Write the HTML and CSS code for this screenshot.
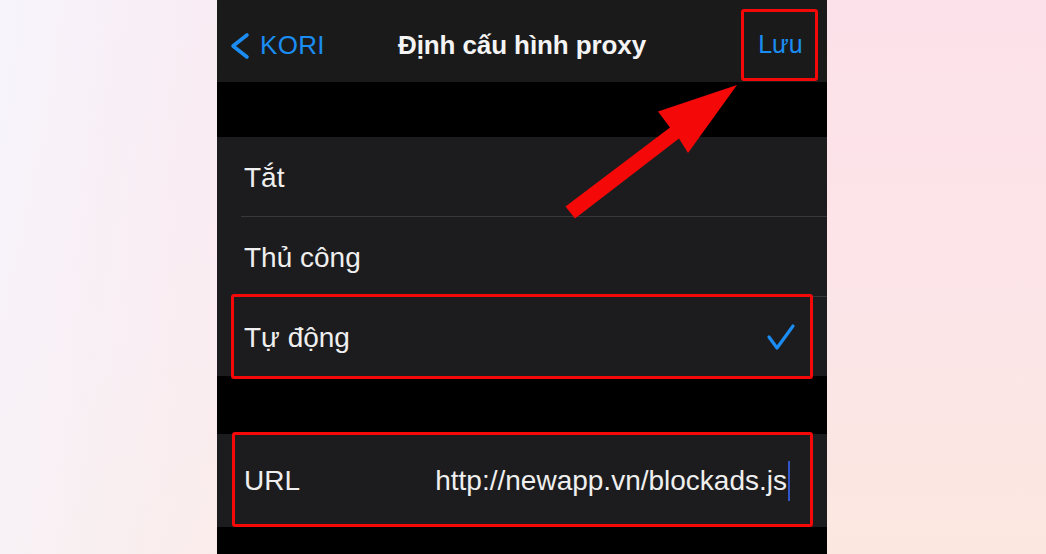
FILE: index.html
```html
<!DOCTYPE html>
<html lang="vi">
<head>
<meta charset="utf-8">
<title>Định cấu hình proxy</title>
<link rel="stylesheet" href="styles.css">
</head>
<body>
<div class="page">
  <main class="phone">
    <header class="nav">
      <div class="nav-left">
        <a class="back">
          <svg class="chevron" width="20" height="28" viewBox="0 0 20 28"><path d="M17 3 L3 14 L17 25" fill="none" stroke="#1b8df2" stroke-width="3.6" stroke-linecap="round" stroke-linejoin="round"/></svg>
          <span>KORI</span>
        </a>
      </div>
      <h1 class="title">Định cấu hình proxy</h1>
      <div class="nav-right"><span class="save">Lưu</span></div>
    </header>
    <div class="gap gap-top"></div>
    <ul class="group">
      <li class="row"><span class="label">Tắt</span></li>
      <li class="row"><span class="label">Thủ công</span></li>
      <li class="row highlight selected">
        <span class="label">Tự động</span>
        <svg class="check" width="30" height="28" viewBox="0 0 30 28"><path d="M3 14 L11 25 L27 3" fill="none" stroke="#1b8df2" stroke-width="3.2" stroke-linecap="round" stroke-linejoin="round"/></svg>
      </li>
    </ul>
    <div class="gap gap-mid"></div>
    <div class="group">
      <div class="row row-url highlight-url">
        <span class="label">URL</span>
        <span class="url-value">http://newapp.vn/blockads.js<span class="cursor"></span></span>
      </div>
    </div>
  </main>
  <svg class="arrow" width="1046" height="554" viewBox="0 0 1046 554">
    <polygon points="565.5,206.5 670,127.5 658,111.5 737,85 688,153 679,138.5 575,218.5" fill="#f50808"/>
  </svg>
</div>
</body>
</html>
```
FILE: styles.css
```css
* { box-sizing: border-box; }
html, body { margin: 0; padding: 0; }
body {
  width: 1046px;
  height: 554px;
  overflow: hidden;
  font-family: "Liberation Sans", Arial, sans-serif;
}
.page {
  position: relative;
  width: 1046px;
  height: 554px;
  padding-left: 217px;
  background:
    linear-gradient(100deg, rgba(247,245,252,0.95) 0%, rgba(252,238,240,0.0) 45%),
    linear-gradient(180deg, #fce1ea 0%, #fce5e7 60%, #fce7e0 100%);
}
.phone {
  width: 610px;
  height: 554px;
  background: #000;
  display: flex;
  flex-direction: column;
}
.nav {
  height: 82px;
  padding-top: 8px;
  background: #1a1a1b;
  display: grid;
  grid-template-columns: 1fr auto 1fr;
  align-items: center;
}
.nav-left { padding-left: 13px; }
.back {
  display: flex;
  align-items: center;
  gap: 10px;
  color: #1b8df2;
  font-size: 26px;
  letter-spacing: 0.3px;
}
.chevron { display: block; margin-top: 1px; }
.title {
  margin: 0;
  color: #f4f4f4;
  font-size: 26px;
  font-weight: bold;
  letter-spacing: -0.1px;
}
.nav-right {
  display: flex;
  justify-content: flex-end;
  padding-right: 9px;
}
.save {
  width: 77px;
  height: 72px;
  margin-top: -1px;
  border: 3px solid #f50808;
  border-radius: 3px;
  display: flex;
  align-items: center;
  justify-content: center;
  color: #1b8df2;
  font-size: 25px;
  padding-left: 2px;
  padding-bottom: 1px;
}
.gap-top { height: 55px; }
.gap-mid { height: 58px; }
.group {
  list-style: none;
  margin: 0;
  padding: 0 0 0 24px;
  background: #1c1c1e;
}
.row {
  position: relative;
  height: 79px;
  padding-left: 3px;
  padding-top: 3px;
  display: flex;
  align-items: center;
  color: #efefef;
  font-size: 28px;
}
.row + .row {
  height: 80px;
  border-top: 1px solid #38383a;
}
.label { display: block; }
.selected { justify-content: space-between; padding-right: 31px; }
.check { display: block; margin-top: -2px; }
.highlight::after {
  content: "";
  position: absolute;
  left: -10px;
  right: 14px;
  top: -3px;
  bottom: -3px;
  border: 3px solid #f50808;
  border-radius: 3px;
}
.row-url {
  height: 93px;
  padding-top: 0;
  justify-content: space-between;
  padding-right: 37px;
}
.highlight-url::after {
  content: "";
  position: absolute;
  left: -9px;
  right: 14px;
  top: -2px;
  bottom: 0;
  border: 3px solid #f50808;
  border-radius: 3px;
}
.url-value {
  display: flex;
  align-items: center;
  color: #efefef;
}
.cursor {
  display: block;
  width: 2px;
  height: 40px;
  margin-left: 1px;
  background: #2f55c8;
}
.arrow {
  position: absolute;
  left: 0;
  top: 0;
  pointer-events: none;
}
```
